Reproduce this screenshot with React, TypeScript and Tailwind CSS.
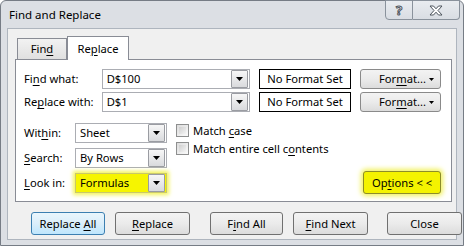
import React from "react";

const font = { fontFamily: '"Noto Sans", "Open Sans", sans-serif' };

function U({ children }: { children: React.ReactNode }) {
  return <span className="underline underline-offset-[2px]">{children}</span>;
}

function Arrow() {
  return (
    <div className="w-[17px] h-[18px] m-px border border-[#9a9ca2] rounded-[1px] bg-gradient-to-b from-[#f7f7f7] to-[#d9dadd] flex items-center justify-center">
      <svg width="7" height="4" viewBox="0 0 7 4">
        <path d="M0 0h7L3.5 4z" fill="#000" />
      </svg>
    </div>
  );
}

function Combo({ value, w, yellow }: { value: string; w: string; yellow?: boolean }) {
  return (
    <div
      className={
        "h-[20px] border flex items-center justify-between " +
        w +
        (yellow
          ? " bg-[#f6f500] border-[#c9c86a] shadow-[0_0_4px_2px_#f3f35a]"
          : " bg-white border-[#abadb3]")
      }
    >
      <span className="pl-[4px] text-[11.2px] leading-none text-black">{value}</span>
      <Arrow />
    </div>
  );
}

function Btn({
  children,
  w,
  def,
  yellow,
}: {
  children: React.ReactNode;
  w: string;
  def?: boolean;
  yellow?: boolean;
}) {
  let cls = " border-[#707070] bg-gradient-to-b from-[#f3f3f3] via-[#ebebeb] to-[#dcdcdc]";
  if (def) cls = " border-[#3c7fb1] bg-gradient-to-b from-[#eaf6fd] via-[#dbeefa] to-[#bee6fd]";
  if (yellow) cls = " border-[#8c8c2a] bg-[#f4f300] shadow-[0_0_5px_2px_#f1f15a]";
  return (
    <div
      className={
        "h-[23px] rounded-[3px] border flex items-center justify-center text-[11.2px] leading-none text-black shrink-0 " +
        w +
        cls
      }
    >
      <span>{children}</span>
    </div>
  );
}

function Check({ children }: { children: React.ReactNode }) {
  return (
    <div className="flex items-center h-[13px]">
      <div className="w-[13px] h-[13px] border border-[#8e8f8f] bg-gradient-to-br from-[#dcdcdc] to-[#fbfbfb] p-[2px]">
        <div className="w-full h-full bg-gradient-to-br from-[#cfcfcf] to-[#f4f4f4]" />
      </div>
      <span className="ml-[4px] text-[11.2px] leading-none text-black">{children}</span>
    </div>
  );
}

function FormatBtn() {
  return (
    <div className="w-[81px] h-[20px] rounded-[3px] border border-[#8a8a8a] bg-gradient-to-b from-[#f3f3f3] via-[#ebebeb] to-[#dcdcdc] flex items-center text-[11.2px] leading-none text-black">
      <span className="ml-[18px]">
        For<U>m</U>at...
      </span>
      <svg className="ml-auto mr-[6px]" width="5" height="3" viewBox="0 0 5 3">
        <path d="M0 0h5L2.5 3z" fill="#000" />
      </svg>
    </div>
  );
}

function NoFormat() {
  return (
    <div className="w-[92px] h-[20px] border border-black bg-white flex items-center justify-center text-[11.2px] leading-none text-black">
      No Format Set
    </div>
  );
}

export default function App() {
  return (
    <div className="w-[466px] h-[249px] bg-white" style={font}>
      <div className="w-[464px] h-[246px] rounded-t-[6px] border border-[#767c85] bg-[#dcdfe4] flex flex-col">
        <div className="h-[27px] flex items-start justify-between">
          <span className="ml-[8px] mt-[8px] text-[11.5px] leading-none text-black">Find and Replace</span>
          <div className="flex mr-[3px] -mt-px">
            <div className="w-[28px] h-[20px] border border-[#8a929c] rounded-bl-[4px] bg-gradient-to-b from-[#e9ecf0] to-[#d9dde3] flex items-center justify-center text-[13px] font-bold leading-none text-white [-webkit-text-stroke:1px_#4d545d]">
              ?
            </div>
            <div className="w-[47px] h-[20px] border border-l-0 border-[#8a929c] rounded-br-[4px] bg-gradient-to-b from-[#e9ecf0] to-[#d9dde3] flex items-center justify-center">
              <svg width="14" height="11" viewBox="0 0 14 11">
                <path
                  d="M1 1h3.5L7 3.8 9.5 1H13L9 5.5 13 10H9.5L7 7.2 4.5 10H1L5 5.5z"
                  fill="#fff"
                  stroke="#4d545d"
                  strokeWidth="1"
                  strokeLinejoin="round"
                />
              </svg>
            </div>
          </div>
        </div>

        <div className="mx-[6px] mb-[5px] flex-1 bg-[#f0f0f0] border border-[#aeb5be] flex flex-col pt-[7px] pl-[7px] pr-[4px]">
          {/* tabs */}
          <div className="flex items-end ml-[2px] h-[23px]">
            <div className="w-[50px] h-[21px] border border-b-0 border-[#898c95] bg-gradient-to-b from-[#f2f2f2] to-[#e0e0e0] flex items-center justify-center text-[11.2px] leading-none text-black">
              <span>
                Fin<U>d</U>
              </span>
            </div>
            <div className="relative z-10 w-[62px] h-[24px] -mb-px border border-b-0 border-[#898c95] bg-white flex items-center justify-center text-[11.2px] leading-none text-black">
              <span>
                Re<U>p</U>lace
              </span>
            </div>
          </div>

          {/* panel */}
          <div className="h-[143px] border border-[#898c95] bg-white pt-[9px] pl-[8px] pr-[10px] flex flex-col">
            <div className="flex items-center">
              <span className="w-[78px] text-[11.2px] leading-none text-black">
                Fi<U>n</U>d what:
              </span>
              <Combo value="D$100" w="w-[149px]" />
              <div className="ml-[9px]">
                <NoFormat />
              </div>
              <div className="ml-[9px]">
                <FormatBtn />
              </div>
            </div>
            <div className="flex items-center mt-[3px]">
              <span className="w-[78px] text-[11.2px] leading-none text-black">
                Re<U>p</U>lace with:
              </span>
              <Combo value="D$1" w="w-[149px]" />
              <div className="ml-[9px]">
                <NoFormat />
              </div>
              <div className="ml-[9px]">
                <FormatBtn />
              </div>
            </div>

            <div className="flex mt-[11px]">
              <div className="flex flex-col gap-[5px]">
                <div className="flex items-center">
                  <span className="w-[51px] text-[11.2px] leading-none text-black">
                    Wit<U>h</U>in:
                  </span>
                  <Combo value="Sheet" w="w-[92px]" />
                </div>
                <div className="flex items-center">
                  <span className="w-[51px] text-[11.2px] leading-none text-black">
                    <U>S</U>earch:
                  </span>
                  <Combo value="By Rows" w="w-[92px]" />
                </div>
                <div className="flex items-center">
                  <span className="w-[51px] text-[11.2px] leading-none text-black">
                    <U>L</U>ook in:
                  </span>
                  <Combo value="Formulas" w="w-[92px]" yellow />
                </div>
              </div>
              <div className="flex flex-col gap-[5px] ml-[9px] pt-[1px]">
                <Check>
                  Match <U>c</U>ase
                </Check>
                <Check>
                  Match entire cell c<U>o</U>ntents
                </Check>
              </div>
              <div className="ml-auto self-end -mb-px">
                <Btn w="w-[78px]" yellow>
                  Op<U>t</U>ions &lt; &lt;
                </Btn>
              </div>
            </div>
          </div>

          {/* bottom buttons */}
          <div className="flex mt-[10px]">
            <div className="ml-[16px]">
              <Btn w="w-[74px]" def>
                Replace <U>A</U>ll
              </Btn>
            </div>
            <div className="ml-[10px]">
              <Btn w="w-[75px]">
                <U>R</U>eplace
              </Btn>
            </div>
            <div className="ml-[20px]">
              <Btn w="w-[73px]">
                F<U>i</U>nd All
              </Btn>
            </div>
            <div className="ml-[10px]">
              <Btn w="w-[75px]">
                <U>F</U>ind Next
              </Btn>
            </div>
            <div className="ml-[19px]">
              <Btn w="w-[75px]">Close</Btn>
            </div>
          </div>
        </div>
      </div>
    </div>
  );
}
